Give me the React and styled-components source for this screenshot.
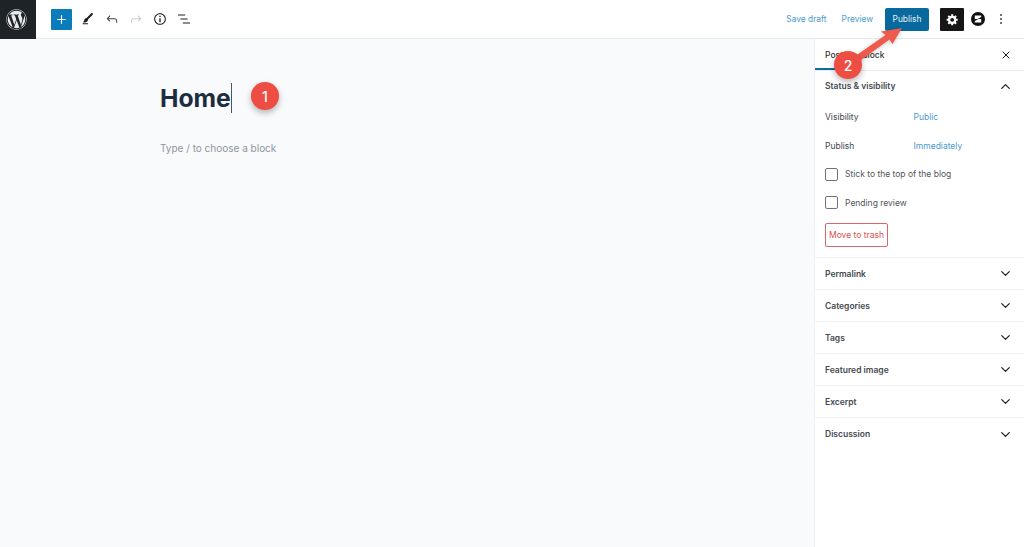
import React from "react";
import styled, { createGlobalStyle } from "styled-components";
import { FaWordpress } from "react-icons/fa";
import { ChevronDown, ChevronUp, X } from "lucide-react";

const GlobalStyle = createGlobalStyle`
  html, body {
    margin: 0;
    padding: 0;
    background: #fff;
    font-family: Inter, "Liberation Sans", sans-serif;
  }
  * { box-sizing: border-box; }
`;

const Icon = ({ d, size = 24, color = "#1e1e1e", box = 24 }) => (
  <svg width={size} height={size} viewBox={`0 0 ${box} ${box}`} fill={color}>
    <path d={d} />
  </svg>
);

const PATHS = {
  plus: "M18 11.2h-5.2V6h-1.6v5.2H6v1.6h5.2V18h1.6v-5.2H18z",
  tool: "M4 20h8v-1.5H4V20zM18.9 3.5c-.6-.6-1.5-.6-2.1 0l-7.2 7.2c-.4-.1-.7 0-1.1.1-.5.2-1.5.7-1.9 2.2-.4 1.7-.8 2.2-1.1 2.7-.1.1-.2.3-.3.4l-.6 1.1H6c2 0 3.4-.4 4.7-1.4.8-.6 1.2-1.4 1.3-2.3 0-.3 0-.5-.1-.7L19 5.7c.5-.6.5-1.6-.1-2.2z",
  undo: "M18.3 11.7c-.6-.6-1.4-.9-2.3-.9H6.7l2.9-3.3-1.1-1-4.5 5L8.5 16l1-1-2.7-2.7H16c.5 0 .9.2 1.3.5 1 1 1 3.4 1 4.5v.3h1.5v-.2c0-1.5 0-4.3-1.5-5.7z",
  redo: "M15.6 6.5l-1.1 1 2.9 3.3H8c-.9 0-1.7.3-2.3.9-1.4 1.5-1.4 4.2-1.4 5.6v.2h1.5v-.3c0-1.1 0-3.5 1-4.5.3-.3.7-.5 1.3-.5h9.2L14.5 15l1.1 1.1 4.6-4.6-4.6-5z",
  info: "M12 3.2c-4.8 0-8.8 3.9-8.8 8.8 0 4.8 3.9 8.8 8.8 8.8 4.8 0 8.8-3.9 8.8-8.8 0-4.8-4-8.8-8.8-8.8zm0 16c-4 0-7.2-3.3-7.2-7.2C4.8 8 8 4.8 12 4.8s7.2 3.3 7.2 7.2c0 4-3.2 7.2-7.2 7.2zM11 17h2v-6h-2v6zm0-8h2V7h-2v2z",
  list: "M13.8 5.2H3v1.5h10.8V5.2zm-3.6 12v1.5H21v-1.5H10.2zm7.2-6H6.6v1.5h10.8v-1.5z",
  cog: "M18 12h-2.18c-.17.7-.44 1.35-.81 1.93l1.54 1.54-2.1 2.1-1.54-1.54c-.58.36-1.23.63-1.91.79V19H8v-2.18c-.68-.16-1.33-.43-1.91-.79l-1.54 1.54-2.12-2.12 1.54-1.54c-.36-.58-.63-1.23-.79-1.91H1V9.03h2.17c.16-.7.44-1.35.8-1.94L2.43 5.55l2.1-2.1 1.54 1.54c.58-.37 1.24-.64 1.93-.81V2h3v2.18c.68.16 1.33.43 1.91.79l1.54-1.54 2.12 2.12-1.54 1.54c.36.59.64 1.24.8 1.94H18V12zm-8.5 1.5c1.66 0 3-1.34 3-3s-1.34-3-3-3-3 1.34-3 3 1.34 3 3 3z",
};

const collapsed = ["Permalink", "Categories", "Tags", "Featured image", "Excerpt", "Discussion"];

const App = () => {
  return (
    <Page>
      <GlobalStyle />
      <TopBar>
        <Logo><FaWordpress size={21} color="#e8eaec" /></Logo>
        <LeftTools>
          <AddButton><Icon d={PATHS.plus} size={17} color="#fff" /></AddButton>
          <ToolIcon><Icon d={PATHS.tool} size={16} /></ToolIcon>
          <ToolIcon><Icon d={PATHS.undo} size={16} color="#3c434a" /></ToolIcon>
          <ToolIcon><Icon d={PATHS.redo} size={16} color="#c9ced3" /></ToolIcon>
          <ToolIcon><Icon d={PATHS.info} size={16} /></ToolIcon>
          <ToolIcon><Icon d={PATHS.list} size={16} /></ToolIcon>
        </LeftTools>
        <RightTools>
          <SaveLink>Save draft</SaveLink>
          <PreviewLink>Preview</PreviewLink>
          <PublishButton>Publish</PublishButton>
          <SettingsButton><Icon d={PATHS.cog} size={13} box={20} color="#fff" /></SettingsButton>
          <BrandIcon>
            <svg width="14" height="14" viewBox="0 0 14 14">
              <circle cx="7" cy="7" r="7" fill="#111" />
              <path d="M3.8 3.6h6.4v1.3L6.6 7H3.8zM10.2 10.4H3.8V9.1L7.4 7h2.8z" fill="#fff" />
            </svg>
          </BrandIcon>
          <MoreDots><i /><i /><i /></MoreDots>
        </RightTools>
      </TopBar>

      <Main>
        <Editor>
          <Title>Home<Caret /></Title>
          <Placeholder>Type / to choose a block</Placeholder>
        </Editor>

        <Sidebar>
          <Tabs>
            <Tab $active>Post</Tab>
            <Tab>Block</Tab>
            <CloseIcon><X size={12} strokeWidth={2} color="#1e1e1e" /></CloseIcon>
          </Tabs>

          <StatusPanel>
            <PanelHead>
              <PanelTitle>Status &amp; visibility</PanelTitle>
              <ChevronUp size={15} strokeWidth={2} color="#1e1e1e" />
            </PanelHead>
            <FieldRow>
              <FieldLabel>Visibility</FieldLabel>
              <FieldValue>Public</FieldValue>
            </FieldRow>
            <FieldRow>
              <FieldLabel>Publish</FieldLabel>
              <FieldValue>Immediately</FieldValue>
            </FieldRow>
            <CheckRow><CheckBox />Stick to the top of the blog</CheckRow>
            <CheckRow><CheckBox />Pending review</CheckRow>
            <TrashButton>Move to trash</TrashButton>
          </StatusPanel>

          {collapsed.map((name) => (
            <Panel key={name}>
              <PanelTitle>{name}</PanelTitle>
              <ChevronDown size={15} strokeWidth={2} color="#1e1e1e" />
            </Panel>
          ))}
        </Sidebar>
      </Main>

      <Arrow width="80" height="50" viewBox="0 0 80 50">
        <path d="M14 36.5 L53.5 9 L49 5.5 L70 2 L60.5 18 L57.5 13.5 L18 42 Z" fill="#ee5a4c" />
      </Arrow>
      <Badge $x={265} $y={96}>1</Badge>
      <Badge $x={848} $y={65}>2</Badge>
    </Page>
  );
};

const Page = styled.div`
  position: relative;
  width: 1024px;
  height: 547px;
  overflow: hidden;
  display: flex;
  flex-direction: column;
  color: #1e1e1e;
`;

const TopBar = styled.header`
  height: 39px;
  flex: none;
  display: flex;
  align-items: flex-start;
  background: #fff;
  border-bottom: 1px solid #e6e9ec;
`;

const Logo = styled.div`
  width: 36px;
  height: 39px;
  padding-right: 3px;
  display: flex;
  align-items: center;
  justify-content: center;
  background: #1e2327;
`;

const LeftTools = styled.div`
  display: flex;
  align-items: center;
  height: 38px;
  margin-left: 15px;
`;

const AddButton = styled.div`
  width: 21px;
  height: 21px;
  margin-right: 4px;
  display: flex;
  align-items: center;
  justify-content: center;
  background: #0a7cba;
  border-radius: 1px;
`;

const ToolIcon = styled.div`
  width: 24px;
  height: 24px;
  display: flex;
  align-items: center;
  justify-content: center;
`;

const RightTools = styled.div`
  margin-left: auto;
  height: 38px;
  display: flex;
  align-items: center;
`;

const SaveLink = styled.span`
  font-size: 8.4px;
  color: #4a9bcb;
  margin-right: 15px;
`;

const PreviewLink = styled(SaveLink)`
  margin-right: 12px;
`;

const PublishButton = styled.div`
  width: 44px;
  height: 23px;
  display: flex;
  align-items: center;
  justify-content: center;
  font-size: 8.4px;
  color: #e6f1f7;
  background: #08699f;
  border-radius: 2px;
`;

const SettingsButton = styled.div`
  width: 24px;
  height: 23px;
  margin-left: 11px;
  display: flex;
  align-items: center;
  justify-content: center;
  background: #161616;
  border-radius: 1px;
`;

const BrandIcon = styled.div`
  width: 14px;
  height: 14px;
  margin-left: 7px;
  display: flex;
`;

const MoreDots = styled.div`
  width: 3px;
  margin: 0 21px 0 15px;
  display: flex;
  flex-direction: column;
  gap: 2px;
  i {
    width: 2px;
    height: 2px;
    border-radius: 50%;
    background: #444;
  }
`;

const Main = styled.div`
  flex: 1;
  display: flex;
  min-height: 0;
`;

const Editor = styled.main`
  flex: 1;
  padding: 42px 0 0 160px;
  background: #f8fafc;
`;

const Title = styled.h1`
  margin: 0;
  height: 34px;
  display: flex;
  align-items: center;
  font-size: 24.7px;
  line-height: 34px;
  font-weight: 700;
  color: #1c2d3f;
`;

const Caret = styled.span`
  width: 1px;
  height: 30px;
  background: #48586a;
`;

const Placeholder = styled.p`
  margin: 25px 0 0;
  font-size: 10px;
  line-height: 16px;
  color: #8f969d;
`;

const Sidebar = styled.aside`
  width: 210px;
  flex: none;
  background: #fff;
  border-left: 1px solid #eef0f2;
  display: flex;
  flex-direction: column;
`;

const Tabs = styled.div`
  height: 32px;
  flex: none;
  display: flex;
  align-items: stretch;
  border-bottom: 1px solid #e8eaed;
`;

const Tab = styled.div`
  width: ${(p) => (p.$active ? "38px" : "auto")};
  padding: 0 0 0 ${(p) => (p.$active ? "10px" : "9px")};
  display: flex;
  align-items: center;
  font-size: 8.5px;
  font-weight: 500;
  color: #333;
  box-shadow: ${(p) => (p.$active ? "inset 0 -2px 0 #0b6fa4" : "none")};
`;

const CloseIcon = styled.div`
  margin-left: auto;
  width: 36px;
  display: flex;
  align-items: center;
  justify-content: center;
`;

const StatusPanel = styled.section`
  height: 187px;
  flex: none;
  padding: 0 11px 0 10px;
  border-bottom: 1px solid #eef0f2;
`;

const PanelHead = styled.div`
  height: 30px;
  margin-bottom: 2px;
  display: flex;
  align-items: center;
  justify-content: space-between;
`;

const Panel = styled.section`
  height: 32px;
  flex: none;
  padding: 0 11px 0 10px;
  display: flex;
  align-items: center;
  justify-content: space-between;
  &:not(:last-child) { border-bottom: 1px solid #eef0f2; }
`;

const PanelTitle = styled.h2`
  margin: 0;
  font-size: 8.5px;
  font-weight: 600;
  color: #44494f;
`;

const FieldRow = styled.div`
  height: 28.5px;
  display: flex;
  align-items: center;
`;

const FieldLabel = styled.span`
  width: 88.5px;
  font-size: 8.5px;
  color: #41464c;
`;

const FieldValue = styled.span`
  font-size: 8.5px;
  color: #4a9bcb;
`;

const CheckRow = styled.label`
  height: 28.5px;
  display: flex;
  align-items: center;
  gap: 7px;
  font-size: 8.5px;
  color: #50555b;
`;

const CheckBox = styled.span`
  width: 13px;
  height: 13px;
  background: #fff;
  border: 1px solid #6f757b;
  border-radius: 2px;
`;

const TrashButton = styled.div`
  width: 63px;
  height: 24px;
  margin-top: 6px;
  display: flex;
  align-items: center;
  justify-content: center;
  font-size: 8.5px;
  color: #d6504f;
  background: #fff;
  border: 1px solid #d9666a;
  border-radius: 2px;
`;

const Arrow = styled.svg`
  position: absolute;
  left: 832px;
  top: 26px;
  filter: drop-shadow(0 1px 2px rgba(0, 0, 0, 0.2));
`;

const Badge = styled.div`
  position: absolute;
  left: ${(p) => p.$x - 14}px;
  top: ${(p) => p.$y - 14}px;
  width: 28px;
  height: 28px;
  display: flex;
  align-items: center;
  justify-content: center;
  border-radius: 50%;
  font-size: 14px;
  font-weight: 500;
  color: #fff;
  background: #ee4d43;
  box-shadow: 0 3px 6px rgba(0, 0, 0, 0.28);
`;

export default App;
